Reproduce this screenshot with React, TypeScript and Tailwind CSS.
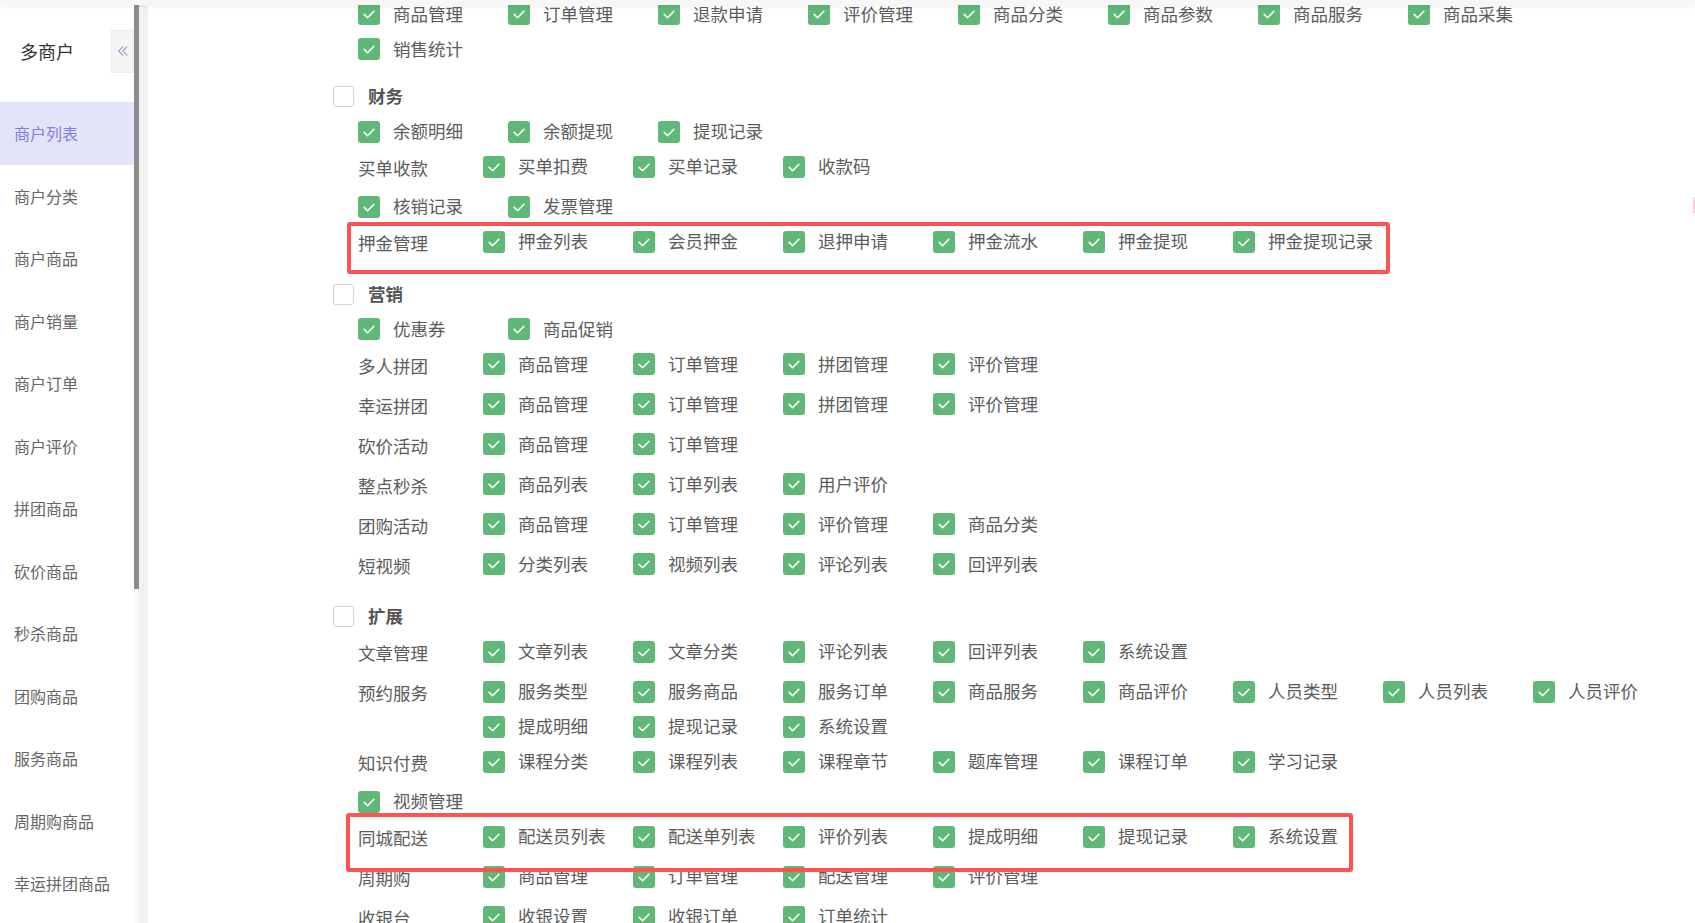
import React from 'react';

type Row =
  | { kind: 'leaf'; items: string[] }
  | { kind: 'sub'; label: string; items: string[]; mark?: { top: number; left: number; w: number; h: number } };

type Group = { title?: string; rows: Row[] };

const groups: Group[] = [
  {
    rows: [
      {
        kind: 'leaf',
        items: ['商品管理', '订单管理', '退款申请', '评价管理', '商品分类', '商品参数', '商品服务', '商品采集', '销售统计'],
      },
    ],
  },
  {
    title: '财务',
    rows: [
      { kind: 'leaf', items: ['余额明细', '余额提现', '提现记录'] },
      { kind: 'sub', label: '买单收款', items: ['买单扣费', '买单记录', '收款码'] },
      { kind: 'leaf', items: ['核销记录', '发票管理'] },
      {
        kind: 'sub',
        label: '押金管理',
        items: ['押金列表', '会员押金', '退押申请', '押金流水', '押金提现', '押金提现记录'],
        mark: { top: -2, left: -11, w: 1043, h: 52 },
      },
    ],
  },
  {
    title: '营销',
    rows: [
      { kind: 'leaf', items: ['优惠券', '商品促销'] },
      { kind: 'sub', label: '多人拼团', items: ['商品管理', '订单管理', '拼团管理', '评价管理'] },
      { kind: 'sub', label: '幸运拼团', items: ['商品管理', '订单管理', '拼团管理', '评价管理'] },
      { kind: 'sub', label: '砍价活动', items: ['商品管理', '订单管理'] },
      { kind: 'sub', label: '整点秒杀', items: ['商品列表', '订单列表', '用户评价'] },
      { kind: 'sub', label: '团购活动', items: ['商品管理', '订单管理', '评价管理', '商品分类'] },
      { kind: 'sub', label: '短视频', items: ['分类列表', '视频列表', '评论列表', '回评列表'] },
    ],
  },
  {
    title: '扩展',
    rows: [
      { kind: 'sub', label: '文章管理', items: ['文章列表', '文章分类', '评论列表', '回评列表', '系统设置'] },
      {
        kind: 'sub',
        label: '预约服务',
        items: ['服务类型', '服务商品', '服务订单', '商品服务', '商品评价', '人员类型', '人员列表', '人员评价', '提成明细', '提现记录', '系统设置'],
      },
      { kind: 'sub', label: '知识付费', items: ['课程分类', '课程列表', '课程章节', '题库管理', '课程订单', '学习记录'] },
      { kind: 'leaf', items: ['视频管理'] },
      {
        kind: 'sub',
        label: '同城配送',
        items: ['配送员列表', '配送单列表', '评价列表', '提成明细', '提现记录', '系统设置'],
        mark: { top: -6.5, left: -12, w: 1007, h: 59 },
      },
      { kind: 'sub', label: '周期购', items: ['商品管理', '订单管理', '配送管理', '评价管理'] },
      { kind: 'sub', label: '收银台', items: ['收银设置', '收银订单', '订单统计'] },
    ],
  },
];

const menu = [
  '商户列表',
  '商户分类',
  '商户商品',
  '商户销量',
  '商户订单',
  '商户评价',
  '拼团商品',
  '砍价商品',
  '秒杀商品',
  '团购商品',
  '服务商品',
  '周期购商品',
  '幸运拼团商品',
];

const CheckItem = ({ text }: { text: string }) => (
  <div className="flex h-[35px] w-[150px] items-center">
    <span className="flex h-[22px] w-[22px] shrink-0 items-center justify-center rounded-[3px] bg-[#5fb878]">
      <svg width="22" height="22" viewBox="0 0 22 22" fill="none">
        <path d="M6.2 11.4l3.4 3.3 6.3-6.4" stroke="#fff" strokeWidth="1.6" strokeLinecap="round" strokeLinejoin="round" />
      </svg>
    </span>
    <span className="ml-[13px] whitespace-nowrap text-[17.5px] text-[#5c5c5c]">{text}</span>
  </div>
);

const App = () => {
  return (
    <div
      className="relative flex h-[923px] w-full overflow-hidden bg-white"
      style={{ fontFamily: '"Noto Sans CJK SC", "Microsoft YaHei", sans-serif' }}
    >
      {/* sidebar */}
      <aside className="w-[134px] shrink-0 bg-white">
        <div className="flex h-[102px] items-center">
          <span className="pl-[20px] text-[18px] text-[#333]">多商户</span>
          <button className="ml-auto flex h-[43px] w-[23px] items-center justify-center border border-[#ececec] bg-[#f5f5f5]">
            <svg width="12" height="12" viewBox="0 0 12 12" fill="none">
              <path d="M6 1.5L1.8 6 6 10.5M10.2 1.5L6 6l4.2 4.5" stroke="#9fb0c8" strokeWidth="1.3" />
            </svg>
          </button>
        </div>
        <nav>
          {menu.map((m, i) => (
            <div
              key={m}
              className={`flex h-[62.5px] items-center pl-[14px] text-[16px] ${
                i === 0 ? 'bg-[#e4e4f8] text-[#7e7ee6]' : 'text-[#666]'
              }`}
            >
              {m}
            </div>
          ))}
        </nav>
      </aside>

      {/* scrollbar + gutter */}
      <div className="w-[5px] shrink-0 bg-[#f9f9f9] pt-[5px]">
        <div className="h-[584px] bg-[#8c8c8c]" />
      </div>
      <div className="w-[9px] shrink-0 bg-[#f1f1f1]" />

      {/* content */}
      <main className="flex-1 pl-[185px]">
        <div className="-mt-[3.5px]">
          {groups.map((g, gi) => (
            <section key={gi} className={g.title ? 'mt-[12.5px]' : ''}>
              {g.title && (
                <div className="flex h-[35px] items-center">
                  <span className="h-[21px] w-[21px] rounded-[3px] border border-[#d2d2d2] bg-white" />
                  <span className="ml-[14px] text-[17.5px] font-bold text-[#555]">{g.title}</span>
                </div>
              )}
              {g.rows.map((r, ri) =>
                r.kind === 'leaf' ? (
                  <div key={ri} className="ml-[25px] flex w-[1200px] flex-wrap">
                    {r.items.map((t, ti) => (
                      <CheckItem key={ti} text={t} />
                    ))}
                  </div>
                ) : (
                  <div key={ri} className="relative ml-[25px] flex min-h-[40px]">
                    <div className="h-[40px] w-[125px] shrink-0 text-[17.5px] leading-[38px] text-[#5c5c5c]">{r.label}</div>
                    <div className="flex w-[1200px] flex-wrap content-start">
                      {r.items.map((t, ti) => (
                        <CheckItem key={ti} text={t} />
                      ))}
                    </div>
                    {r.mark && (
                      <div
                        className="pointer-events-none absolute z-10 rounded-[3px] border-[4.5px] border-[#ff5252]"
                        style={{ top: r.mark.top, left: r.mark.left, width: r.mark.w, height: r.mark.h }}
                      />
                    )}
                  </div>
                )
              )}
            </section>
          ))}
        </div>
      </main>

      {/* top bar shadow edge */}
      <div className="absolute left-0 right-0 top-0 z-20 h-[5px] bg-[#f7f7f7] shadow-[0_2px_4px_rgba(0,0,0,0.05)]" />
      {/* small mark on right edge */}
      <div className="absolute right-0 top-[197px] h-[16px] w-[2px] bg-[#fcd0d0]" />
    </div>
  );
};

export default App;
